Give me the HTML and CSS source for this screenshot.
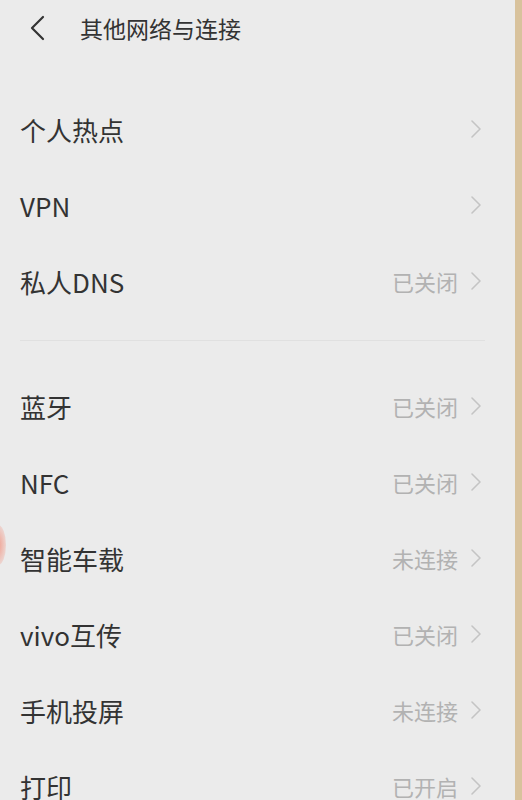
FILE: index.html
```html
<!DOCTYPE html>
<html lang="zh-CN">
<head>
    <meta charset="UTF-8">
    <meta name="viewport" content="width=device-width, initial-scale=1.0">
    <title>其他网络与连接</title>
    <link rel="stylesheet" href="styles.css">
</head>
<body>
    <div class="screen">
        <div class="header">
            <svg class="back" width="20" height="28" viewBox="0 0 20 28">
                <path d="M15 3 L4 14 L15 25" fill="none" stroke="#333" stroke-width="2.2" stroke-linecap="round" stroke-linejoin="round"/>
            </svg>
            <span class="title">其他网络与连接</span>
        </div>

        <div class="group first">
            <div class="row"><span class="label">个人热点</span><span class="right"><svg class="arrow" viewBox="0 0 12 20"><path d="M2 2 L10 10 L2 18" /></svg></span></div>
            <div class="row"><span class="label">VPN</span><span class="right"><svg class="arrow" viewBox="0 0 12 20"><path d="M2 2 L10 10 L2 18" /></svg></span></div>
            <div class="row"><span class="label">私人DNS</span><span class="right"><span class="status">已关闭</span><svg class="arrow" viewBox="0 0 12 20"><path d="M2 2 L10 10 L2 18" /></svg></span></div>
        </div>

        <div class="divider"></div>

        <div class="group">
            <div class="row"><span class="label">蓝牙</span><span class="right"><span class="status">已关闭</span><svg class="arrow" viewBox="0 0 12 20"><path d="M2 2 L10 10 L2 18" /></svg></span></div>
            <div class="row"><span class="label">NFC</span><span class="right"><span class="status">已关闭</span><svg class="arrow" viewBox="0 0 12 20"><path d="M2 2 L10 10 L2 18" /></svg></span></div>
            <div class="row"><span class="label">智能车载</span><span class="right"><span class="status">未连接</span><svg class="arrow" viewBox="0 0 12 20"><path d="M2 2 L10 10 L2 18" /></svg></span></div>
            <div class="row"><span class="label">vivo互传</span><span class="right"><span class="status">已关闭</span><svg class="arrow" viewBox="0 0 12 20"><path d="M2 2 L10 10 L2 18" /></svg></span></div>
            <div class="row"><span class="label">手机投屏</span><span class="right"><span class="status">未连接</span><svg class="arrow" viewBox="0 0 12 20"><path d="M2 2 L10 10 L2 18" /></svg></span></div>
            <div class="row"><span class="label">打印</span><span class="right"><span class="status">已开启</span><svg class="arrow" viewBox="0 0 12 20"><path d="M2 2 L10 10 L2 18" /></svg></span></div>
        </div>

        <div class="glare"></div>
    </div>
</body>
</html>
```

FILE: styles.css
```css
body {
    margin: 0;
    background: #d8c29c;
    font-family: "Noto Sans CJK SC", "Noto Sans", sans-serif;
    overflow: hidden;
}
.screen {
    position: relative;
    width: 515px;
    height: 800px;
    background: #ebebeb;
    overflow: hidden;
}
.header {
    height: 56px;
    display: flex;
    align-items: center;
    padding-left: 28px;
}
.back {
    margin-right: 32px;
}
.title {
    font-size: 23px;
    color: #333;
}
.group.first {
    margin-top: 35px;
}
.row {
    height: 76px;
    display: flex;
    align-items: center;
    justify-content: space-between;
    padding: 0 33px 0 20px;
}
.label {
    font-size: 26px;
    color: #333;
}
.right {
    display: flex;
    align-items: center;
}
.status {
    font-size: 22px;
    color: #b2b2b2;
    margin-right: 12px;
}
.arrow {
    width: 12px;
    height: 20px;
}
.arrow path {
    fill: none;
    stroke: #c4c4c4;
    stroke-width: 1.6;
    stroke-linecap: round;
    stroke-linejoin: round;
}
.divider {
    height: 1px;
    background: #e0e0e0;
    margin: 21px 30px 27px 20px;
}
.glare {
    position: absolute;
    left: -10px;
    top: 525px;
    width: 16px;
    height: 40px;
    border-radius: 50%;
    background: radial-gradient(#f0a090, rgba(240, 160, 144, 0));
}
```
